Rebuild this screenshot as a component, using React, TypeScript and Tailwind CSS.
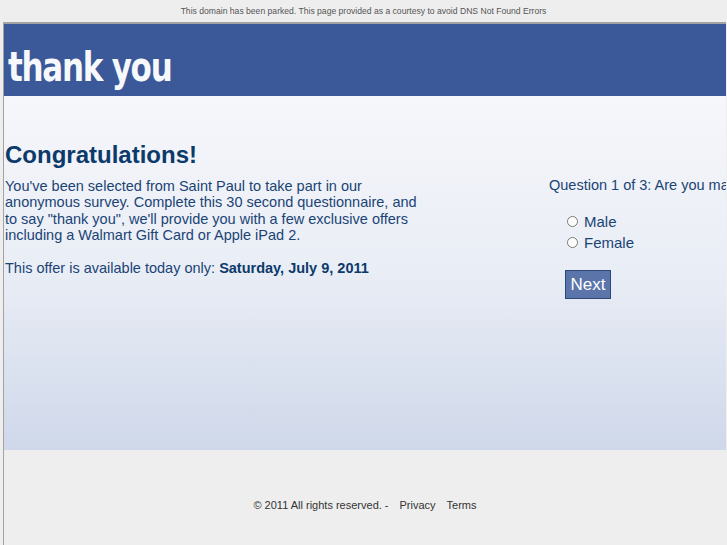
import { useState } from "react";

const App = () => {
  const [gender, setGender] = useState<string>("");

  return (
    <div
      className="min-h-[545px] w-[727px] overflow-hidden bg-[#eeeeee]"
      style={{ fontFamily: '"Liberation Sans", Arial, sans-serif' }}
    >
      {/* parked domain notice */}
      <div className="flex h-[22px] items-center justify-center text-[8.6px] text-[#555]">
        This domain has been parked. This page provided as a courtesy to avoid DNS Not Found Errors
      </div>

      <div className="ml-[3px] w-[723px] overflow-hidden border-l border-t-2 border-[#a3a3a3]">
        {/* header */}
        <div className="flex h-[72px] items-start bg-[#3b5998] pl-[4px] pt-[23px]">
          <span
            className="inline-block origin-left scale-x-[0.84] text-[41px] font-bold leading-none tracking-[-1.5px] text-[#f7f8fb]"
            style={{ fontFamily: '"DejaVu Sans Condensed", "DejaVu Sans", sans-serif' }}
          >
            thank you
          </span>
        </div>

        {/* main survey panel */}
        <div className="h-[354px] bg-gradient-to-b from-[#f6f7fb] via-[#e9edf5] to-[#cfd8ea] pt-[45px] text-[#1a4475]">
          <div className="flex">
            <div className="w-[420px] shrink-0 pl-[1px]">
              <h1 className="text-[24px] font-bold leading-[28px] text-[#0c3a6b]">Congratulations!</h1>
              <p className="mt-[9px] text-[14.5px] leading-[16.3px]">
                You've been selected from Saint Paul to take part in our anonymous survey. Complete this 30 second
                questionnaire, and to say "thank you", we'll provide you with a few exclusive offers including a
                Walmart Gift Card or Apple iPad 2.
              </p>
              <p className="mt-[17px] text-[14.5px] leading-[16.3px]">
                This offer is available today only: <b className="text-[#0c3a6b]">Saturday, July 9, 2011</b>
              </p>
            </div>

            <div className="ml-[125px] shrink-0 pt-[36px]">
              <div className="whitespace-nowrap text-[14.5px] leading-[17px]">
                Question 1 of 3: Are you male or female?
              </div>
              <div className="mt-[19px] flex flex-col gap-[4px] pl-[18px]">
                {["Male", "Female"].map((g) => (
                  <label key={g} className="flex cursor-pointer items-center gap-[6px] text-[15px] leading-[17px]">
                    <input
                      type="radio"
                      name="gender"
                      checked={gender === g}
                      onChange={() => setGender(g)}
                      className="h-[11px] w-[11px] accent-[#3b5998]"
                    />
                    {g}
                  </label>
                ))}
              </div>
              <button className="ml-[16px] mt-[19px] h-[29px] w-[46px] border border-[#2e4678] bg-[#5b74aa] text-[17px] text-white">
                Next
              </button>
            </div>
          </div>
        </div>

        {/* footer */}
        <div className="flex h-[95px] items-start justify-center gap-[11px] pt-[47px] text-[11px] text-[#333]">
          <span>© 2011 All rights reserved. -</span>
          <a href="#">Privacy</a>
          <a href="#">Terms</a>
        </div>
      </div>
    </div>
  );
};

export default App;
